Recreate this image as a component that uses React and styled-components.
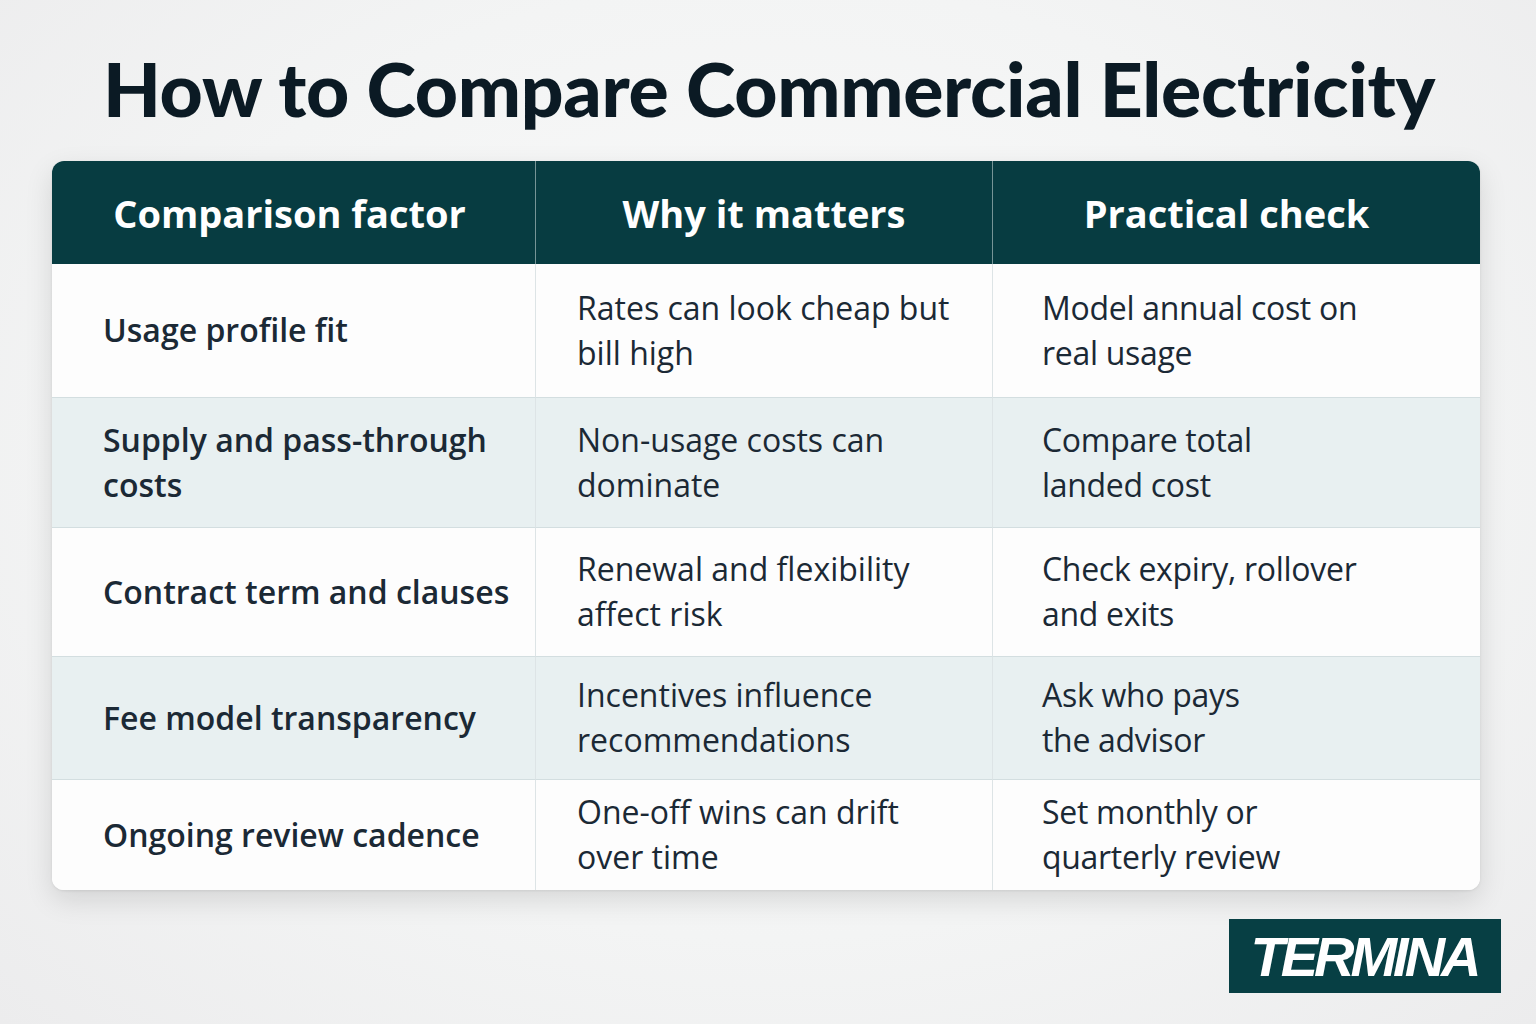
import React from "react";
import styled, { createGlobalStyle } from "styled-components";

const Global = createGlobalStyle`
  html, body { margin: 0; padding: 0; }
  body {
    width: 1536px;
    height: 1024px;
    overflow: hidden;
    background: radial-gradient(ellipse at 50% 45%, #fbfbfb 0%, #f3f4f4 60%, #ececed 100%);
    font-family: "Open Sans", "Noto Sans", sans-serif;
  }
`;

const Page = styled.div`
  width: 1536px;
  height: 1024px;
  box-sizing: border-box;
  padding-top: 50px;
  display: flex;
  flex-direction: column;
  align-items: center;
`;

const Title = styled.h1`
  margin: 0 0 0 2px;
  font-family: "Lato", "Open Sans", sans-serif;
  font-weight: 900;
  font-size: 75px;
  line-height: 76px;
  color: #0b1a24;
  letter-spacing: -0.3px;
`;

const Table = styled.div`
  margin-top: 35px;
  margin-right: 4px;
  width: 1428px;
  display: grid;
  grid-template-columns: 483px 457px 488px;
  border-radius: 12px;
  overflow: hidden;
  background: #fdfdfd;
  box-shadow: 0 10px 28px rgba(0, 0, 0, 0.12), 0 1px 3px rgba(0, 0, 0, 0.08);
`;

const HeadCell = styled.div`
  height: 103px;
  background: #073c41;
  display: flex;
  align-items: center;
  justify-content: center;
  color: #ffffff;
  font-weight: 700;
  font-size: 38px;
  padding-right: ${(p) => p.$pr || 0}px;
  box-sizing: border-box;
  border-left: ${(p) => (p.$first ? "none" : "1.5px solid rgba(255,255,255,0.45)")};
`;

const Cell = styled.div`
  height: ${(p) => p.$h}px;
  box-sizing: border-box;
  background: ${(p) => (p.$alt ? "#e8f0f1" : "#fdfdfd")};
  border-top: ${(p) => (p.$top ? "none" : "1.5px solid #d3dee0")};
  border-left: ${(p) => (p.$first ? "none" : "1.5px solid #dde4e6")};
  display: flex;
  flex-direction: column;
  justify-content: center;
  padding-left: ${(p) => p.$pl}px;
  padding-bottom: 2px;
  color: #1b2935;
  font-size: 32px;
  line-height: 45px;
  font-weight: ${(p) => (p.$first ? 600 : 400)};
  letter-spacing: ${(p) => p.$ls}px;
`;

const Line = styled.span`
  display: block;
  white-space: nowrap;
`;

const Footer = styled.div`
  width: 100%;
  display: flex;
  justify-content: flex-end;
  box-sizing: border-box;
  padding-right: 35px;
  margin-top: 29px;
`;

const Logo = styled.div`
  width: 272px;
  height: 74px;
  background: #073f44;
  display: flex;
  align-items: center;
  justify-content: center;
  color: #ffffff;
  font-family: "Liberation Sans", Arial, sans-serif;
  font-style: italic;
  font-weight: 700;
  font-size: 56px;
  letter-spacing: -4px;
  padding-right: 2px;
  box-sizing: border-box;
`;

const headers = ["Comparison factor", "Why it matters", "Practical check"];
const pads = [51, 41, 49];
const spacing = [0, 0, -0.3];

const rows = [
  {
    h: 133,
    cells: [["Usage profile fit"], ["Rates can look cheap but", "bill high"], ["Model annual cost on", "real usage"]],
  },
  {
    h: 130,
    cells: [["Supply and pass-through", "costs"], ["Non-usage costs can", "dominate"], ["Compare total", "landed cost"]],
  },
  {
    h: 129,
    cells: [["Contract term and clauses"], ["Renewal and flexibility", "affect risk"], ["Check expiry, rollover", "and exits"]],
  },
  {
    h: 123,
    cells: [["Fee model transparency"], ["Incentives influence", "recommendations"], ["Ask who pays", "the advisor"]],
  },
  {
    h: 111,
    cells: [["Ongoing review cadence"], ["One-off wins can drift", "over time"], ["Set monthly or", "quarterly review"]],
  },
];

export default function App() {
  return (
    <>
      <Global />
      <Page>
        <Title>How to Compare Commercial Electricity</Title>
        <Table>
          {headers.map((h, i) => (
            <HeadCell key={h} $first={i === 0} $pr={i === 2 ? 20 : i === 0 ? 8 : 0}>
              {h}
            </HeadCell>
          ))}
          {rows.map((r, ri) =>
            r.cells.map((lines, ci) => (
              <Cell
                key={ri + "-" + ci}
                $h={r.h}
                $alt={ri % 2 === 1}
                $top={ri === 0}
                $first={ci === 0}
                $pl={pads[ci]}
                $ls={spacing[ci]}
              >
                {lines.map((l) => (
                  <Line key={l}>{l}</Line>
                ))}
              </Cell>
            ))
          )}
        </Table>
        <Footer>
          <Logo>TERMINA</Logo>
        </Footer>
      </Page>
    </>
  );
}
